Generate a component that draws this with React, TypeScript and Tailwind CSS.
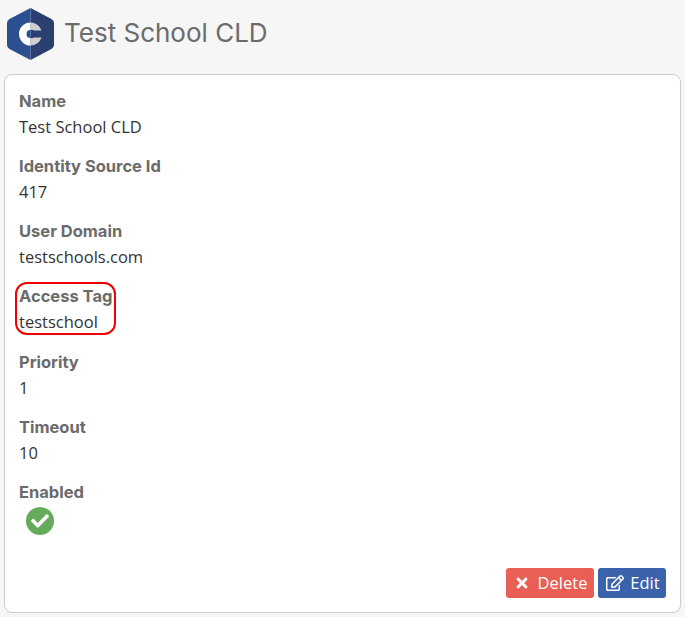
import { FaCheck, FaRegEdit, FaTimes } from "react-icons/fa"

const fields = [
  { label: "Name", value: "Test School CLD", row: "h-[65px]" },
  { label: "Identity Source Id", value: "417", row: "h-[65px]" },
  { label: "User Domain", value: "testschools.com", row: "h-[65px]" },
  { label: "Access Tag", value: "testschool", row: "h-[66px]", marked: true },
  { label: "Priority", value: "1", row: "h-[65px]" },
  { label: "Timeout", value: "10", row: "h-[65px]" },
]

const Logo = () => (
  <svg width="47" height="52" viewBox="0 0 47 52" className="shrink-0">
    <path d="M23.5 0 L44.5 11 Q47 12.5 47 15 L47 37 Q47 39.5 44.5 41 L23.5 52 Z" fill="#2b3f70" />
    <path d="M23.5 0 L2.5 11 Q0 12.5 0 15 L0 37 Q0 39.5 2.5 41 L23.5 52 Z" fill="#2c4f8f" />
    <path d="M23.5 14.5 A11.5 11.5 0 0 0 23.5 37.5 L23.5 30 A4 4 0 0 1 23.5 22 Z" fill="#ffffff" />
    <path d="M23.5 14.5 A11.5 11.5 0 0 1 34.5 22.5 L27 22.5 A4 4 0 0 0 23.5 22 Z" fill="#cfcfcf" />
    <path d="M23.5 37.5 A11.5 11.5 0 0 0 34.5 29.5 L27 29.5 A4 4 0 0 1 23.5 30 Z" fill="#cfcfcf" />
  </svg>
)

const Label = ({ text }: { text: string }) => (
  <div className="text-[16.5px] leading-[26px] font-bold text-[#6b6b6b] font-['Inter',sans-serif]">
    {text}
  </div>
)

export default function App() {
  return (
    <div className="w-[685px] h-[617px] overflow-hidden bg-[#f6f6f6] font-['Open_Sans',sans-serif]">
      <div className="h-[74px] flex items-start gap-[11px] pl-[7px] pt-[8px]">
        <Logo />
        <h1 className="mt-[7px] -ml-[1px] text-[26px] leading-[36px] text-[#6b6b6b] font-['Inter',sans-serif]">
          Test School CLD
        </h1>
      </div>
      <div className="ml-[4px] w-[677px] h-[539px] bg-white border border-[#cccccc] rounded-[8px] px-[14px] pt-[13px] flex flex-col">
        {fields.map((f) => (
          <div key={f.label} className={`relative ${f.row}`}>
            <Label text={f.label} />
            <div className="text-[16.5px] leading-[26px] text-[#333333]">{f.value}</div>
            {f.marked && (
              <div className="absolute left-[-4px] top-[-1px] w-[101px] h-[53px] border-2 border-[#f00000] rounded-[12px]" />
            )}
          </div>
        ))}
        <Label text="Enabled" />
        <div className="ml-[7px] mt-[2px] w-[28px] h-[28px] rounded-full bg-[#65ab5c] flex items-center justify-center text-white text-[18px]">
          <FaCheck />
        </div>
        <div className="mt-auto mb-[14px] flex justify-end gap-[4px]">
          <button className="h-[30px] w-[88px] rounded-[3px] bg-[#e95f55] text-white text-[16.5px] flex items-center justify-center gap-[8px] pl-[1px]">
            <FaTimes className="text-[16px]" />
            Delete
          </button>
          <button className="h-[30px] w-[68px] rounded-[3px] bg-[#3b63ab] text-white text-[16.5px] flex items-center justify-center gap-[6px] pl-[2px]">
            <FaRegEdit className="text-[18px]" />
            Edit
          </button>
        </div>
      </div>
    </div>
  )
}
